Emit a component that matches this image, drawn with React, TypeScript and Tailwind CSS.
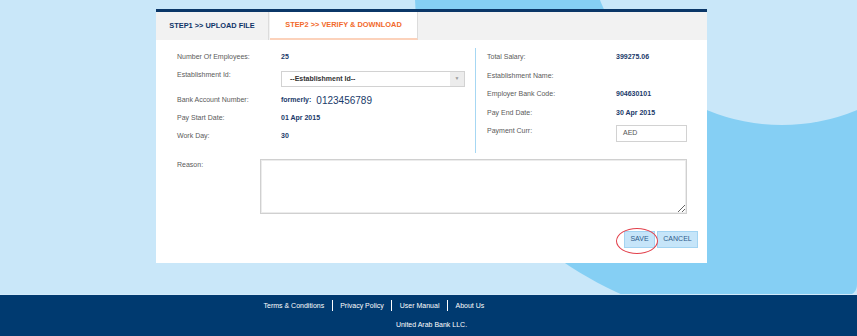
import React from "react";

function Label({ children, w }: { children?: React.ReactNode; w: string }) {
  return <div className={`${w} shrink-0 text-[7px] text-[#5a5a5a]`}>{children}</div>;
}

function Value({ children }: { children?: React.ReactNode }) {
  return <div className="text-[7px] font-bold text-[#1a3a6a]">{children}</div>;
}

function Card() {
  return (
    <div className="w-[551px] h-[254px] bg-white border-t-[3px] border-[#0b3768] flex flex-col">
      <div className="h-[28px] shrink-0 bg-[#f2f2f2] flex">
        <div className="w-[113px] border-r border-[#dcdcdc] flex items-center justify-center text-[7.4px] font-bold text-[#0e3468]">
          STEP1 &gt;&gt; UPLOAD FILE
        </div>
        <div className="w-[148px] ml-[1px] bg-white border-r border-r-[#dcdcdc] border-b-2 border-b-[#fcd2bb] flex items-center justify-center text-[7.4px] font-bold text-[#f26a2c]">
          STEP2 &gt;&gt; VERIFY &amp; DOWNLOAD
        </div>
      </div>

      <div className="flex-1 pl-[21px] pt-[8px] flex flex-col">
        <div className="flex h-[105px]">
          <div className="w-[298px] flex flex-col">
            <div className="h-[18px] flex items-center">
              <Label w="w-[104px]">Number Of Employees:</Label>
              <Value>25</Value>
            </div>
            <div className="h-[25px] flex items-start">
              <div className="w-[104px] leading-[18px] text-[7px] text-[#5a5a5a]">Establishment Id:</div>
              <div className="mt-[5px] w-[184px] h-[16px] border border-[#d2d2d2] bg-white flex">
                <div className="flex-1 flex items-center pl-[8px] text-[7px] font-semibold text-[#333]">
                  --Establishment Id--
                </div>
                <div className="w-[14px] bg-[#ececec] flex items-center justify-center text-[5px] text-[#9a9a9a]">
                  ▼
                </div>
              </div>
            </div>
            <div className="h-[18px] flex items-center">
              <Label w="w-[104px]">Bank Account Number:</Label>
              <div className="flex items-center gap-[5px] text-[#1a3a6a]">
                <span className="text-[7px] font-bold">formerly:</span>
                <span className="text-[10px]">0123456789</span>
              </div>
            </div>
            <div className="h-[18px] flex items-center">
              <Label w="w-[104px]">Pay Start Date:</Label>
              <Value>01 Apr 2015</Value>
            </div>
            <div className="h-[18px] flex items-center">
              <Label w="w-[104px]">Work Day:</Label>
              <Value>30</Value>
            </div>
          </div>

          <div className="border-l border-[#a6d7f3] pl-[11px] flex flex-col">
            <div className="h-[18.5px] flex items-center">
              <Label w="w-[129px]">Total Salary:</Label>
              <Value>399275.06</Value>
            </div>
            <div className="h-[18.5px] flex items-center">
              <Label w="w-[129px]">Establishment Name:</Label>
            </div>
            <div className="h-[18.5px] flex items-center">
              <Label w="w-[129px]">Employer Bank Code:</Label>
              <Value>904630101</Value>
            </div>
            <div className="h-[18.5px] flex items-center">
              <Label w="w-[129px]">Pay End Date:</Label>
              <Value>30 Apr 2015</Value>
            </div>
            <div className="flex items-start">
              <div className="w-[129px] leading-[18.5px] text-[7px] text-[#5a5a5a]">Payment Curr:</div>
              <div className="mt-[3px] w-[71px] h-[17px] border border-[#d2d2d2] flex items-center pl-[6px] text-[7px] text-[#555]">
                AED
              </div>
            </div>
          </div>
        </div>

        <div className="mt-[6px] flex items-start">
          <div className="w-[83px] leading-[12px] text-[7px] text-[#5a5a5a]">Reason:</div>
          <textarea className="w-[427px] h-[55px] border border-[#d0d0d0] bg-white outline-none shadow-[inset_0_0_0_1px_#ececec]" />
        </div>

        <div className="mt-[17px] flex justify-end pr-[9px] gap-[2px]">
          <div className="relative">
            <div className="w-[31px] h-[17px] bg-[#c6e5f9] border border-[#a3d4f2] flex items-center justify-center text-[7px] text-[#2d5b8b]">
              SAVE
            </div>
            <div className="absolute left-[-8px] top-[-3px] w-[42px] h-[26px] rounded-[50%] border border-[#e2414c]" />
          </div>
          <div className="w-[41px] h-[17px] bg-[#c6e5f9] border border-[#a3d4f2] flex items-center justify-center text-[7px] text-[#2d5b8b]">
            CANCEL
          </div>
        </div>
      </div>
    </div>
  );
}

export default function App() {
  const links = ["Terms & Conditions", "Privacy Policy", "User Manual", "About Us"];
  return (
    <div className="relative w-[857px] h-[336px] overflow-hidden bg-[#c9e7f9] font-['Liberation_Sans',Arial,sans-serif]">
      <svg className="absolute left-0 top-0" width="857" height="336" viewBox="0 0 857 336">
        <path d="M415,0 C420,150 520,250 625,296 L843,296 Q857,296 857,284 L857,0 Z" fill="#85cff4" />
        <circle cx="782" cy="-70" r="195" fill="#c9e7f9" />
      </svg>
      <div className="relative flex flex-col h-full">
        <div className="h-[294px] pt-[9px] pl-[156px]">
          <Card />
        </div>
        <footer className="h-[42px] bg-[#003a70] border-t border-[#d3eafa] text-white text-[7px]">
          <div className="flex pt-[5px] pl-[256px]">
            {links.map((l, i) => (
              <span
                key={l}
                className={`px-[7.5px] leading-[11px] ${i > 0 ? "border-l border-white" : ""}`}
              >
                {l}
              </span>
            ))}
          </div>
          <div className="mt-[8px] ml-[156px] w-[551px] text-center leading-[12px]">United Arab Bank LLC.</div>
        </footer>
      </div>
    </div>
  );
}
